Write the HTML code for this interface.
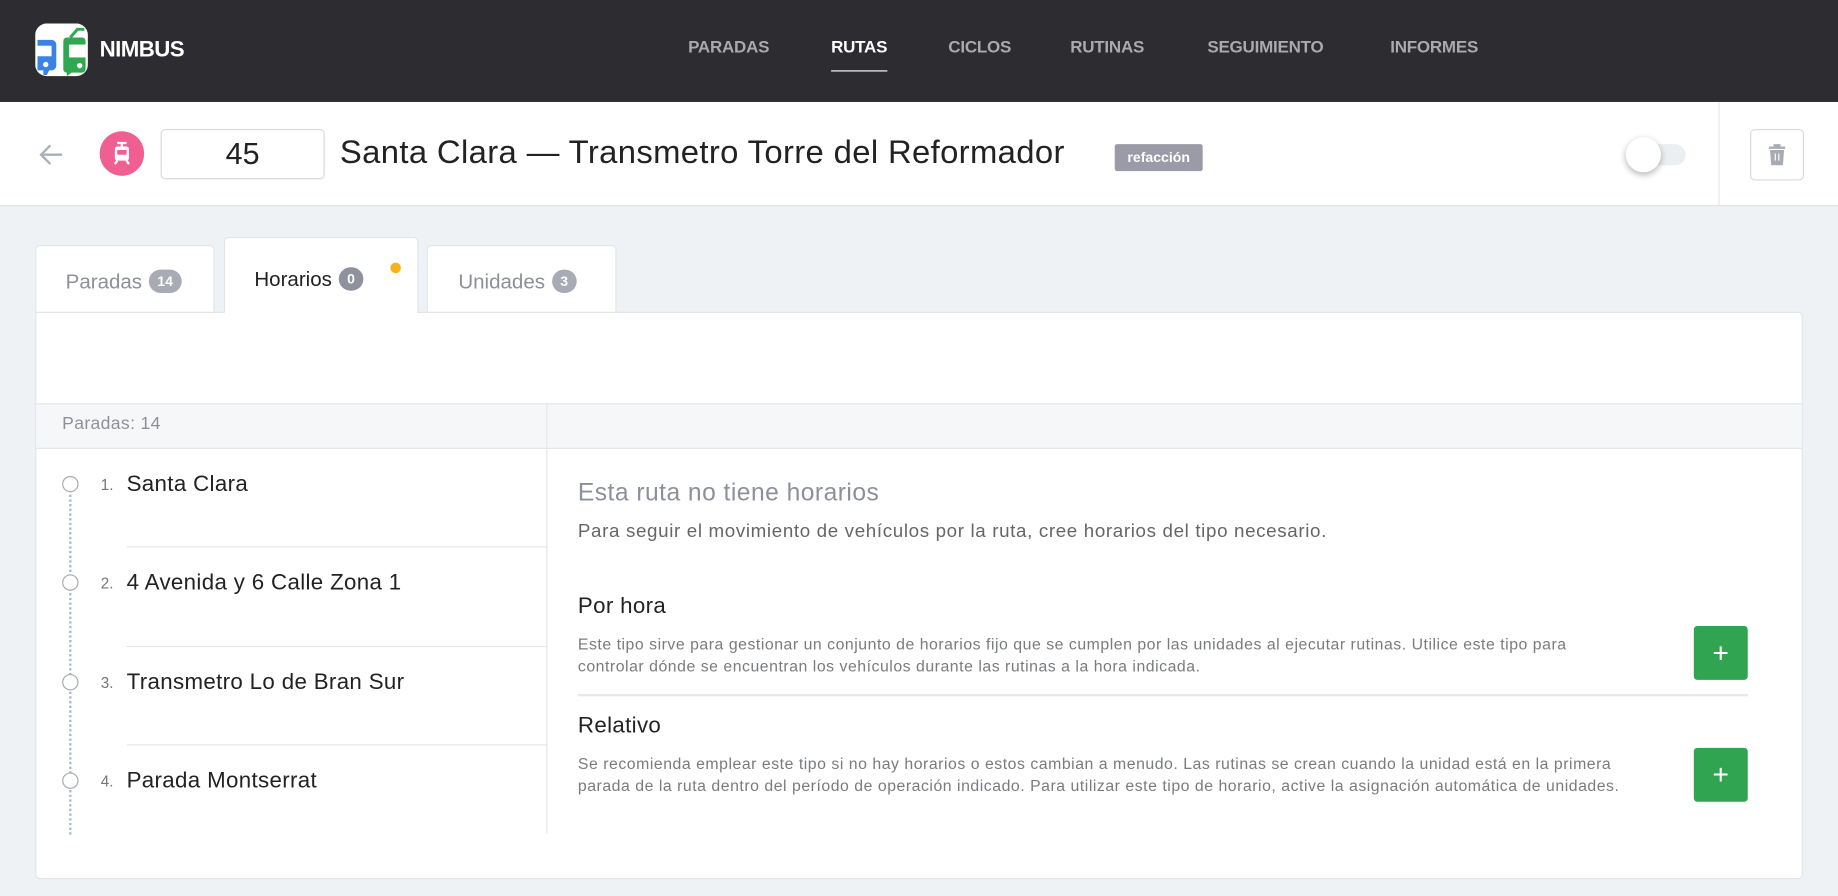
<!DOCTYPE html>
<html><head><meta charset="utf-8">
<style>
*{box-sizing:border-box;margin:0;padding:0}
html,body{width:1838px;height:896px;overflow:hidden;background:#eef2f5;font-family:"Liberation Sans",sans-serif}
#s{position:absolute;left:0;top:0;width:1568px;height:764px;transform:scale(1.17219);transform-origin:0 0}
.a{position:absolute;white-space:nowrap}
.hd{left:0;top:0;width:1568px;height:87px;background:#2d2c31}
.nav{top:33px;font-size:14.5px;font-weight:bold;color:#a9a9ae;letter-spacing:-0.2px}
.sub{left:0;top:87px;width:1568px;height:89px;background:#fff;border-bottom:1px solid #dde2e7}
.tab{background:#fff;border:1px solid #e1e5ea;border-bottom:none;border-radius:4px 4px 0 0;font-size:17.5px;color:#8e9099}
.pill{display:inline-block;background:#a9abb4;color:#fff;font-size:12px;font-weight:bold;border-radius:10px;padding:3px 7px;vertical-align:2px;margin-left:6px}
.circ{width:14px;height:14px;border:1px solid #a9aab0;border-radius:50%;background:#fff}
.dots{width:2px;border-left:2px dotted #a6bccb}
.num{font-size:13px;color:#777}
.name{font-size:19px;color:#222;letter-spacing:0.3px}
.sep{height:1px;background:#e3e6ea}
.desc{font-size:13.5px;color:#7a7b80;line-height:19px;letter-spacing:0.45px}
.btn{width:46px;height:46px;background:#30a451;border-radius:3px;color:#fff;font-size:24px;text-align:center;line-height:48px}
</style></head><body><div id="s">
<div class="a hd"></div>
<svg class="a" style="left:30px;top:20px" width="45" height="45" viewBox="0 0 45 45">
<rect x="0" y="0" width="45" height="45" rx="10" fill="#fff"/>
<path d="M2 14h12a4 4 0 0 1 4 4v18a4 4 0 0 1-4 4h-2l-2 4h-3v-4h-5z" fill="#3b82e8"/>
<rect x="2" y="19" width="12" height="9" fill="#fff"/>
<circle cx="9" cy="35" r="2.3" fill="#fff"/>
<path d="M27 12h13a3 3 0 0 1 3 3v24a3 3 0 0 1-3 3h-9l-4 3v-3a3 3 0 0 1-3-3v-24a3 3 0 0 1 3-3z" fill="#2fa84f"/>
<path d="M30 12l6-7h6" stroke="#2fa84f" stroke-width="2.5" fill="none"/>
<rect x="29" y="18" width="14" height="11" fill="#fff"/>
<circle cx="38" cy="36" r="2.3" fill="#fff"/>
</svg>
<div class="a" style="left:85px;top:32px;font-size:19px;font-weight:bold;color:#fff;letter-spacing:-0.5px">NIMBUS</div>
<div class="a nav" style="left:587px">PARADAS</div>
<div class="a nav" style="left:709px;color:#fff">RUTAS</div>
<div class="a" style="left:709px;top:60px;width:48px;height:1px;background:#fff"></div>
<div class="a nav" style="left:809px">CICLOS</div>
<div class="a nav" style="left:913px">RUTINAS</div>
<div class="a nav" style="left:1030px">SEGUIMIENTO</div>
<div class="a nav" style="left:1186px">INFORMES</div>

<div class="a sub"></div>
<svg class="a" style="left:32px;top:120px" width="24" height="24" viewBox="0 0 24 24"><path d="M21 12H4M11 4l-8 8 8 8" stroke="#a9b0ba" stroke-width="2" fill="none"/></svg>
<div class="a" style="left:85px;top:112px;width:38px;height:38px;border-radius:50%;background:#ef5f92"></div>
<svg class="a" style="left:95px;top:120px" width="18" height="22" viewBox="0 0 18 22"><path d="M5 2h8M9 2v3" stroke="#fff" stroke-width="2"/><rect x="3" y="5" width="12" height="12" rx="2" fill="#fff"/><rect x="5" y="8" width="8" height="4" fill="#ef5f92"/><path d="M5 17l-2 3M13 17l2 3" stroke="#fff" stroke-width="2"/></svg>
<div class="a" style="left:137px;top:110px;width:140px;height:43px;border:1px solid #d6d9de;border-radius:4px;font-size:26px;color:#222;text-align:center;line-height:41px">45</div>
<div class="a" style="left:290px;top:114px;font-size:28px;color:#222;letter-spacing:0.3px">Santa Clara — Transmetro Torre del Reformador</div>
<div class="a" style="left:951px;top:123px;width:75px;height:23px;background:#9a9ba6;border-radius:2px;color:#fff;font-size:12px;font-weight:bold;text-align:center;line-height:23px">refacción</div>
<div class="a" style="left:1394px;top:123px;width:44px;height:18px;border-radius:9px;background:#eceff2"></div>
<div class="a" style="left:1387px;top:117px;width:30px;height:30px;border-radius:50%;background:#fff;box-shadow:0 2px 6px rgba(0,0,0,.3)"></div>
<div class="a" style="left:1466px;top:87px;width:1px;height:89px;background:#e3e6ea"></div>
<div class="a" style="left:1493px;top:110px;width:46px;height:44px;border:1px solid #d6d9de;border-radius:4px"></div>
<svg class="a" style="left:1507px;top:122px" width="18" height="20" viewBox="0 0 18 20"><rect x="2" y="3" width="14" height="2" fill="#a9abb4"/><rect x="6" y="1" width="6" height="2" fill="#a9abb4"/><path d="M3 6h12l-1 13H4z" fill="#a9abb4"/><path d="M7.5 9v6M10.5 9v6" stroke="#fff" stroke-width="1"/></svg>

<div class="a tab" style="left:30px;top:209px;width:153px;height:58px;padding:20px 0 0 25px">Paradas<span class="pill">14</span></div>
<div class="a tab" style="left:364px;top:209px;width:162px;height:58px;padding:20px 0 0 26px">Unidades<span class="pill">3</span></div>
<div class="a" style="left:30px;top:266px;width:1508px;height:484px;background:#fff;border:1px solid #e1e5ea;border-radius:0 4px 4px 4px"></div>
<div class="a tab" style="left:191px;top:202px;width:166px;height:66px;padding:25px 0 0 25px;color:#222;z-index:2;border-bottom:2px solid #fff">Horarios<span class="pill" style="background:#8f929c">0</span></div>
<div class="a" style="left:333px;top:224px;width:9px;height:9px;border-radius:50%;background:#f6b21b;z-index:3"></div>

<div class="a" style="left:31px;top:344px;width:1506px;height:39px;background:#f5f7f9;border-top:1px solid #e3e6ea;border-bottom:1px solid #e3e6ea"></div>
<div class="a" style="left:53px;top:353px;font-size:15px;color:#8e9099;letter-spacing:0.3px">Paradas: 14</div>
<div class="a" style="left:466px;top:344px;width:1px;height:367px;background:#e3e6ea"></div>

<div class="a dots" style="left:59px;top:422px;height:290px"></div>
<div class="a circ" style="left:53px;top:406px"></div>
<div class="a circ" style="left:53px;top:490px"></div>
<div class="a circ" style="left:53px;top:575px"></div>
<div class="a circ" style="left:53px;top:659px"></div>
<div class="a num" style="left:86px;top:406px">1.</div>
<div class="a num" style="left:86px;top:490px">2.</div>
<div class="a num" style="left:86px;top:575px">3.</div>
<div class="a num" style="left:86px;top:659px">4.</div>
<div class="a name" style="left:108px;top:403px">Santa Clara</div>
<div class="a name" style="left:108px;top:487px">4 Avenida y 6 Calle Zona 1</div>
<div class="a name" style="left:108px;top:572px">Transmetro Lo de Bran Sur</div>
<div class="a name" style="left:108px;top:656px">Parada Montserrat</div>
<div class="a sep" style="left:108px;top:466px;width:358px"></div>
<div class="a sep" style="left:108px;top:551px;width:358px"></div>
<div class="a sep" style="left:108px;top:635px;width:358px"></div>

<div class="a" style="left:493px;top:409px;font-size:21px;color:#8e9099;letter-spacing:0.4px">Esta ruta no tiene horarios</div>
<div class="a" style="left:493px;top:445px;font-size:16px;color:#666;letter-spacing:0.55px">Para seguir el movimiento de vehículos por la ruta, cree horarios del tipo necesario.</div>
<div class="a" style="left:493px;top:507px;font-size:19px;color:#222;letter-spacing:0.3px">Por hora</div>
<div class="a desc" style="left:493px;top:540px">Este tipo sirve para gestionar un conjunto de horarios fijo que se cumplen por las unidades al ejecutar rutinas. Utilice este tipo para<br>controlar dónde se encuentran los vehículos durante las rutinas a la hora indicada.</div>
<div class="a btn" style="left:1445px;top:534px">+</div>
<div class="a" style="left:493px;top:592px;width:998px;height:2px;background:#e6e8eb"></div>
<div class="a" style="left:493px;top:609px;font-size:19px;color:#222;letter-spacing:0.3px">Relativo</div>
<div class="a desc" style="left:493px;top:642px">Se recomienda emplear este tipo si no hay horarios o estos cambian a menudo. Las rutinas se crean cuando la unidad está en la primera<br>parada de la ruta dentro del período de operación indicado. Para utilizar este tipo de horario, active la asignación automática de unidades.</div>
<div class="a btn" style="left:1445px;top:638px">+</div>
</div></body></html>
